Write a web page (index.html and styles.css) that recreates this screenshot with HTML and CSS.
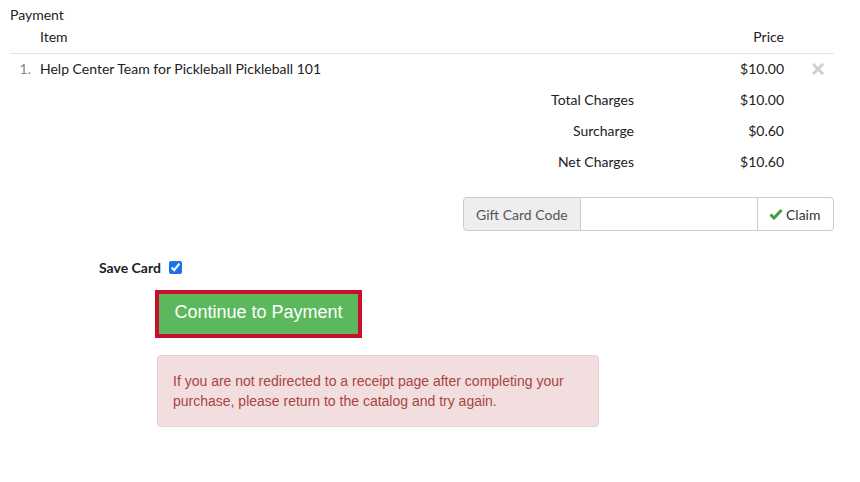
FILE: index.html
```html
<!DOCTYPE html>
<html>
<head>
    <title>Payment</title>
    <link rel="stylesheet" href="styles.css">
</head>
<body>
    <div class="payment">
        <div class="caption">Payment</div>
        <div class="cart">
            <div class="row head">
                <div></div>
                <div>Item</div>
                <div class="num">Price</div>
                <div></div>
            </div>
            <div class="row item">
                <div class="idx">1.</div>
                <div>Help Center Team for Pickleball Pickleball 101</div>
                <div class="num">$10.00</div>
                <div class="remove">
                    <svg width="12" height="12" viewBox="0 0 12 12"><path d="M2 2 L10 10 M10 2 L2 10" stroke="#cfcfcf" stroke-width="3" stroke-linecap="square"/></svg>
                </div>
            </div>
            <div class="row total">
                <div></div>
                <div class="label">Total Charges</div>
                <div class="num">$10.00</div>
                <div></div>
            </div>
            <div class="row total">
                <div></div>
                <div class="label">Surcharge</div>
                <div class="num">$0.60</div>
                <div></div>
            </div>
            <div class="row total">
                <div></div>
                <div class="label">Net Charges</div>
                <div class="num">$10.60</div>
                <div></div>
            </div>
        </div>

        <div class="gift">
            <span class="addon">Gift Card Code</span>
            <input type="text" class="gift-input">
            <button class="claim">
                <svg width="14" height="12" viewBox="0 0 14 12"><path d="M1.5 6.5 L5 10 L12.5 2" fill="none" stroke="#4b9a41" stroke-width="3"/></svg>
                Claim
            </button>
        </div>

        <div class="save">
            <label for="save-card">Save Card</label>
            <input type="checkbox" id="save-card" checked>
        </div>

        <div class="actions">
            <button class="continue">Continue to Payment</button>
            <div class="alert">If you are not redirected to a receipt page after completing your purchase, please return to the catalog and try again.</div>
        </div>
    </div>
</body>
</html>
```

FILE: styles.css
```css
body{
    margin: 0;
    padding: 0;
    background-color: #fff;
    font-family: Lato, "Liberation Sans", sans-serif;
    font-size: 14px;
    color: #222;
}
.payment{
    padding: 6px 26px 0 10px;
}
.caption{
    height: 18px;
    line-height: 18px;
}
.row{
    display: grid;
    grid-template-columns: 30px 594px 150px 50px;
    align-items: center;
    box-sizing: border-box;
    height: 31px;
    padding-bottom: 2px;
}
.head{
    height: 30px;
    line-height: 18px;
    padding-bottom: 4px;
    border-bottom: 1px solid #e2e2e2;
}
.num{
    text-align: right;
}
.idx{
    color: #888;
    text-align: right;
    padding-right: 9px;
}
.label{
    text-align: right;
}
.remove{
    display: flex;
    justify-content: flex-end;
    padding-right: 10px;
}
.remove svg{
    display: block;
}
.gift{
    display: flex;
    justify-content: flex-end;
    margin-top: 19px;
    height: 34px;
}
.addon{
    display: flex;
    align-items: center;
    flex: none;
    width: 118px;
    box-sizing: border-box;
    padding: 0 10px 0 12px;
    white-space: nowrap;
    background-color: #eee;
    border: 1px solid #ccc;
    border-radius: 4px 0 0 4px;
    color: #555;
}
.gift-input{
    width: 176px;
    box-sizing: border-box;
    height: 34px;
    margin: 0;
    border: 1px solid #ccc;
    border-left: none;
    border-right: none;
    outline: none;
}
.claim{
    display: flex;
    align-items: center;
    gap: 3px;
    width: 77px;
    height: 34px;
    box-sizing: border-box;
    padding: 0 0 0 11px;
    background-color: #fff;
    border: 1px solid #ccc;
    border-radius: 0 4px 4px 0;
    font-family: Lato, "Liberation Sans", sans-serif;
    font-size: 14px;
    color: #333;
}
.save{
    display: flex;
    align-items: center;
    margin-top: 26px;
    padding-left: 89px;
    height: 20px;
}
.save label{
    font-weight: 700;
    margin-right: 8px;
}
.save input{
    width: 13px;
    height: 13px;
    margin: 0;
    accent-color: #1a73e8;
}
.actions{
    padding-left: 145px;
    margin-top: 13px;
}
.continue{
    display: block;
    width: 207px;
    height: 48px;
    background-color: #5cb85c;
    border: 4px solid #c8102e;
    color: #fff;
    font-family: "Liberation Sans", Arial, sans-serif;
    font-size: 18px;
    padding: 0 0 4px;
}
.alert{
    width: 442px;
    box-sizing: border-box;
    margin: 17px 0 0 2px;
    padding: 15px 14px 15px 15px;
    background-color: #f2dede;
    border: 1px solid #ebccd1;
    border-radius: 4px;
    color: #a94442;
    font-family: "Liberation Sans", Arial, sans-serif;
    font-size: 14px;
    line-height: 20px;
}
```
